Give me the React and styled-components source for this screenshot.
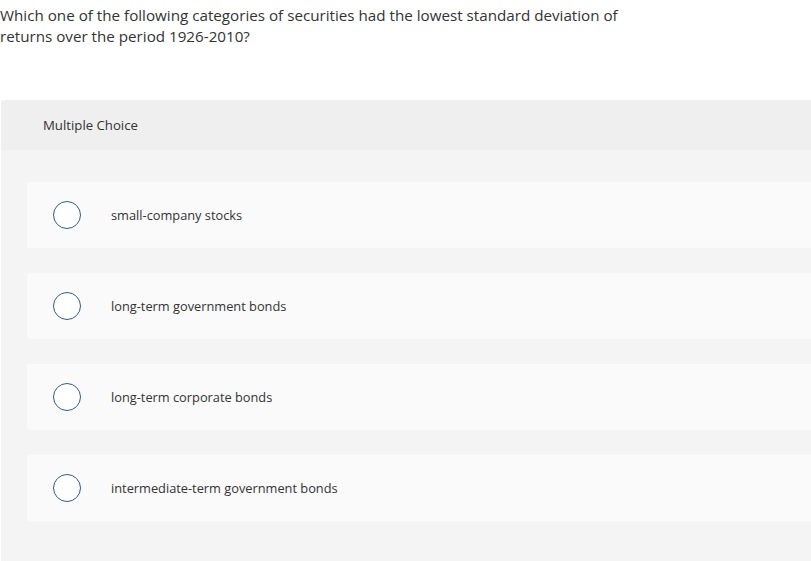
import React from 'react';
import styled, { createGlobalStyle } from 'styled-components';

const GlobalStyle = createGlobalStyle`
  html, body {
    margin: 0;
    padding: 0;
    background: #ffffff;
    overflow: hidden;
  }
  body {
    font-family: "Open Sans", Lato, sans-serif;
    color: #333333;
  }
`;

const Page = styled.div`
  width: 811px;
  height: 561px;
  overflow: hidden;
`;

const Question = styled.p`
  margin: 0;
  padding: 5px 0 0 0;
  width: 660px;
  font-size: 15.2px;
  line-height: 21px;
  color: #333;
`;

const Panel = styled.section`
  margin: 53px 0 0 1px;
  background: #f4f4f4;
  border-radius: 3px 0 0 0;
  padding-bottom: 40px;
`;

const PanelHeader = styled.div`
  height: 50px;
  background: #efefef;
  display: flex;
  align-items: center;
  padding-left: 42px;
  font-size: 13.2px;
  color: #333;
  border-radius: 3px 0 0 0;
`;

const Options = styled.div`
  display: flex;
  flex-direction: column;
  gap: 25px;
  padding: 32px 0 0 26px;
`;

const Option = styled.label`
  display: flex;
  align-items: center;
  height: 66px;
  background: #fafafa;
  border-radius: 3px 0 0 3px;
  cursor: pointer;
`;

const Radio = styled.span`
  box-sizing: border-box;
  flex: none;
  width: 28px;
  height: 28px;
  margin-left: 26px;
  border: 1.5px solid #2e5d8c;
  border-radius: 50%;
  background: #fff;
`;

const OptionText = styled.span`
  margin-left: 30px;
  font-size: 12.8px;
  color: #333;
`;

const choices = [
  'small-company stocks',
  'long-term government bonds',
  'long-term corporate bonds',
  'intermediate-term government bonds',
];

export default function App() {
  return (
    <Page>
      <GlobalStyle />
      <Question>
        Which one of the following categories of securities had the lowest standard deviation of
        returns over the period 1926-2010?
      </Question>
      <Panel>
        <PanelHeader>Multiple Choice</PanelHeader>
        <Options>
          {choices.map((c) => (
            <Option key={c}>
              <Radio />
              <OptionText>{c}</OptionText>
            </Option>
          ))}
        </Options>
      </Panel>
    </Page>
  );
}
